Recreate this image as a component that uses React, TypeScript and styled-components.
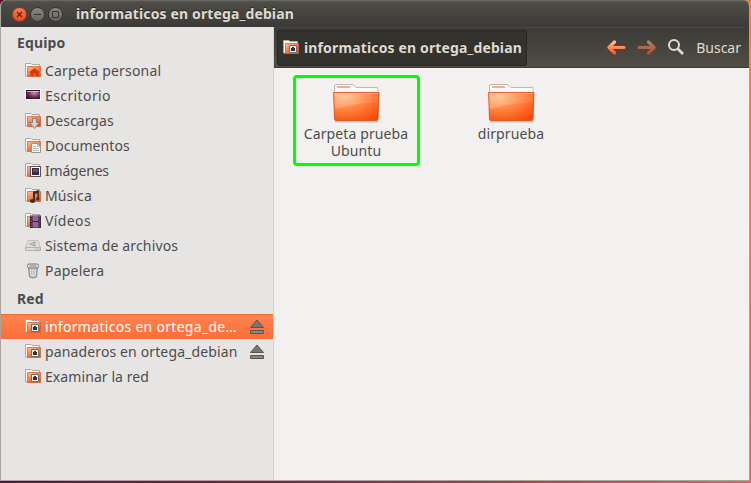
import React from 'react';
import styled, { createGlobalStyle } from 'styled-components';

const GlobalStyle = createGlobalStyle`
  * { box-sizing: border-box; }
  body { margin: 0; font-family: "Noto Sans", "Open Sans", sans-serif; font-size: 14px; color: #4c4c4c; overflow: hidden; }
  svg { display: block; flex: none; }
`;

const Desktop = styled.div`
  width: 751px;
  height: 483px;
  padding-right: 1px;
  padding-bottom: 2px;
  background:
    linear-gradient(90deg, #5c1440 0%, #7a2149 35%, #b53d55 70%, #e8606a 100%) 0 481px / 751px 2px no-repeat,
    linear-gradient(#ff7043 0%, #f2684e 55%, #dd5360 100%) 749px 0 / 2px 483px no-repeat,
    linear-gradient(90deg, #5b0b20 0 10px, #ff7043 10px);
`;

const Window = styled.main`
  display: flex;
  flex-direction: column;
  height: 481px;
  border: 1px solid #aaa39e;
  border-top: 0;
  border-bottom-width: 1px;
  border-radius: 6px 6px 0 0;
  overflow: hidden;
  background: #f2f1f0;
`;

const TitleBar = styled.header`
  display: flex;
  align-items: center;
  flex: none;
  height: 27px;
  margin: 0 -1px;
  padding-left: 12px;
  background: linear-gradient(#535149 0, #4b4a44 4px, #3c3b37 100%);
  border-top: 1px solid #686761;
`;

const WindowButtons = styled.div`
  display: flex;
  gap: 3px;
  width: 64px;
`;

const WindowButton = styled.button<{ $close?: boolean }>`
  width: 15px;
  height: 15px;
  padding: 0;
  border-radius: 50%;
  border: 1px solid ${p => (p.$close ? '#a63715' : '#35342f')};
  background: ${p => (p.$close ? 'linear-gradient(#fb7b53, #e84b1d)' : 'linear-gradient(#89877e, #66655d)')};
`;

const Title = styled.h1<{ $spacing: number }>`
  margin: 0 0 1px;
  font-size: 14px;
  line-height: 20px;
  font-weight: 700;
  color: #dfdbd2;
  white-space: nowrap;
  letter-spacing: ${p => p.$spacing}px;
  text-shadow: 0 -1px #252421;
`;

const PathName = styled(Title)`
  margin: 0;
`;

const Body = styled.div`
  display: flex;
  flex: 1;
  min-height: 0;
`;

const Sidebar = styled.nav`
  width: 273px;
  flex: none;
  background: #e7e5e4;
  border-right: 1px solid #d5d1cf;
`;

const Section = styled.h2`
  margin: 0;
  height: 31px;
  padding-left: 16px;
  font-size: 14px;
  line-height: 32px;
  font-weight: 700;
  letter-spacing: .15px;
  color: #4c4c4c;
`;

const Place = styled.div<{ $selected?: boolean }>`
  display: flex;
  align-items: center;
  gap: 4px;
  height: 25px;
  padding: 0 8px 0 24px;
  color: ${p => (p.$selected ? '#fff' : '#4c4c4c')};
  background: ${p => (p.$selected ? 'linear-gradient(#ff8350, #fc6e38)' : 'none')};
  box-shadow: ${p => (p.$selected ? 'inset 0 1px #ee6a35' : 'none')};
`;

const PlaceName = styled.span<{ $spacing: number }>`
  flex: 1;
  line-height: 24px;
  white-space: nowrap;
  letter-spacing: ${p => p.$spacing}px;
`;

const Main = styled.section`
  flex: 1;
  background: #f2f1f0;
`;

const Toolbar = styled.div`
  display: flex;
  align-items: center;
  height: 41px;
  margin-right: -1px;
  padding: 0 9px 0 3px;
  background: linear-gradient(#3b3a36, #504e45);
  border-top: 1px solid #464540;
  border-bottom: 1px solid #3a3934;
`;

const PathButton = styled.div`
  display: flex;
  align-items: center;
  gap: 5px;
  width: 250px;
  height: 36px;
  margin-right: auto;
  padding-left: 5px;
  border: 1px solid #272622;
  border-radius: 3px;
  background: #33322d;
`;

const Actions = styled.div`
  display: flex;
  align-items: center;
  color: #dfdbd2;
  gap: 11px;
`;

const SearchIcon = styled.svg`
  margin-bottom: 2px;
`;

const Files = styled.div`
  display: flex;
  padding: 7px 0 0 19px;
  gap: 28px;
`;

const File = styled.div<{ $marked?: boolean }>`
  display: flex;
  flex-direction: column;
  align-items: center;
  width: 127px;
  height: 91px;
  padding: 5px 1px 0 0;
  border: 3px solid ${p => (p.$marked ? '#00ff00' : 'transparent')};
  border-radius: 4px;
`;

const FileName = styled.span<{ $spacing: number }>`
  margin-top: 2px;
  line-height: 17px;
  text-align: center;
  white-space: pre-line;
  letter-spacing: ${p => p.$spacing}px;
`;

type Kind = 'home' | 'download' | 'document' | 'image' | 'music' | 'video' | 'network' | 'desktop' | 'disk' | 'trash';

const emblems: Partial<Record<Kind, React.ReactNode>> = {
  home: <path d="M4 9.5 9.5 5l5.5 4.5h-1.3V13h-3v-2.5H8.5V13h-3V9.5z" fill="#d43b08" />,
  download: <path d="M7.500 5.500h4v4h3L9.500 15.500l-5-6h3z" fill="#d5d4d2" stroke="#777" strokeWidth=".9" />,
  document: (
    <>
      <path d="M6.500 5.500h6l3 3v6h-9z" fill="#f5f5f5" stroke="#969696" />
      <path d="M12.500 5.500v3h3M8 8.500h3M8 10.500h6M8 12.500h6" fill="none" stroke="#aaa" strokeWidth=".8" />
    </>
  ),
  image: (
    <>
      <path d="M5.500 3.500h10v10h-10z" fill="#fff" stroke="#55504d" />
      <path d="M7 5h7v7H7z" fill="#3c2945" />
      <path d="M8 6h5v3H8z" fill="#67506f" />
    </>
  ),
  music: (
    <g fill="#333">
      <path d="M8 3.500 14 2v3L10 6v7H8z" />
      <path d="M12.500 3H14v8h-1.500z" />
      <ellipse cx="7.500" cy="13" rx="2.700" ry="2" />
      <ellipse cx="12.700" cy="11" rx="1.600" ry="1.400" />
    </g>
  ),
  video: (
    <>
      <path d="M5 2.500h11V15H5z" fill="#29252b" />
      <path d="M7.500 3h6v5h-6zM7.500 9h6v5.500h-6z" fill="#94659a" />
      <path d="M6.200 3v12M14.800 3v12" stroke="#aaa" strokeWidth=".9" strokeDasharray="1 1.500" />
    </>
  ),
  network: (
    <>
      <path d="M6.500 5.500h7v7h-7z" fill="#eee" stroke="#746e68" />
      <path d="M8 8h1V7h2v1h1v3H8z" fill="#333" />
    </>
  ),
};

function PlaceIcon({ kind }: { kind: Kind }) {
  if (kind === 'desktop')
    return (
      <svg width="16" height="16" viewBox="0 0 16 16">
        <defs>
          <radialGradient id="wall" cx=".6" cy=".35" r=".7">
            <stop stopColor="#c791ad" /><stop offset=".5" stopColor="#81395f" /><stop offset="1" stopColor="#32102b" />
          </radialGradient>
        </defs>
        <path fill="#fff" d="M0 1h16v11H0z" />
        <path fill="url(#wall)" d="M1 2h14v9H1z" />
        <path fill="#301022" d="M1 2h14v1H1z" />
        <path fill="#f1e8ed" d="M2 3h12v.7H2z" />
      </svg>
    );
  if (kind === 'disk')
    return (
      <svg width="16" height="16" viewBox="0 0 16 16">
        <path d="M3 2.500h10l2.500 7H.5z" fill="#dedddc" stroke="#c3c1c0" />
        <path d="M.5 9.500h15v3H.5z" fill="#cfcdcb" stroke="#b3b1af" />
        <path d="M4 6h2l3-2v4L6 6m3-1.500h2m-2 3h2" fill="none" stroke="#a19f9d" />
        <path d="M2 11h8" stroke="#eee" />
      </svg>
    );
  if (kind === 'trash')
    return (
      <svg width="16" height="16" viewBox="0 0 16 16">
        <path d="M3.500 4 4.500 14q3.500 2 7 0l1-10z" fill="#bcbdbd" stroke="#858686" />
        <path d="M5.500 6 6 13.500M8 6v8M10.500 6 10 13.500" stroke="#e4e4e4" />
        <rect x="2.500" y="1" width="11" height="4" rx="1.500" fill="#e5e5e5" stroke="#777" />
        <path d="M4.500 3h7" stroke="#777" />
      </svg>
    );
  return (
    <svg width="16" height="16" viewBox="0 0 16 16">
      <defs>
        <linearGradient id={`place-${kind}`} x2="0.700" y2="1">
          <stop stopColor="#ffc09a" /><stop offset="1" stopColor="#f04810" />
        </linearGradient>
      </defs>
      <path d="M.5 13V.5H6l1 1h7.500V13z" fill="#faf9f8" stroke="#aaa7a4" />
      <path d="M2.500 3.500h13v10h-13z" fill={`url(#place-${kind})`} stroke="#dd612d" strokeWidth=".8" />
      {emblems[kind]}
    </svg>
  );
}

function Eject() {
  return (
    <svg width="16" height="16" viewBox="0 0 16 16">
      <path d="M8 1 14.500 8.500h-13z" fill="#777" stroke="#555" />
      <path d="M1.500 11.500h13v3h-13z" fill="#8a8783" stroke="#555" />
    </svg>
  );
}

function Arrow({ forward }: { forward?: boolean }) {
  const id = forward ? 'arrow-next' : 'arrow-back';
  return (
    <svg width="19" height="16" viewBox="0 0 19 16" opacity={forward ? 0.55 : 1}>
      <defs>
        <linearGradient id={id} gradientUnits="userSpaceOnUse" x1="0" y1="1" x2="0" y2="14">
          <stop stopColor="#ffc294" /><stop offset="1" stopColor="#ff5314" />
        </linearGradient>
      </defs>
      <path
        transform={forward ? 'matrix(-1 0 0 1 19 0)' : undefined}
        d="M7.500 2 2 7.500 7.500 13M2.500 7.500h14.500"
        fill="none"
        stroke={`url(#${id})`}
        strokeWidth="3.200"
        strokeLinecap="round"
        strokeLinejoin="round"
      />
    </svg>
  );
}

function Folder({ id }: { id: string }) {
  return (
    <svg width="48" height="40" viewBox="0 0 48 40">
      <defs>
        <radialGradient id={id} cx=".25" cy=".15" r="1">
          <stop stopColor="#ffbb82" /><stop offset=".45" stopColor="#ff8543" /><stop offset="1" stopColor="#fb4a07" />
        </radialGradient>
        <linearGradient id={`${id}-gloss`} x2="1" y2="0">
          <stop stopColor="#fff" stopOpacity=".2" /><stop offset="1" stopColor="#fff" stopOpacity=".08" />
        </linearGradient>
      </defs>
      <path d="M3 38.500h43" stroke="#000" strokeOpacity=".18" strokeWidth="2" />
      <path d="M2.500 35V3q0-1.500 1.500-1.500h16q1.500 0 2.500 1.500l1.500 1.500H45q1 0 1 1V35z" fill="#fafafa" stroke="#bbb8b5" />
      <path d="M5 3h13v2H5z" fill="#ffac80" />
      <path d="M1.500 9.500h45.500L46 36q0 1.500-1.500 1.500H4Q2.500 37.500 2.500 36z" fill={`url(#${id})`} stroke="#d6490f" strokeOpacity=".75" />
      <path d="M2.500 10.500h43.500l-.4 9Q24 20 3 26z" fill={`url(#${id}-gloss)`} />
      <path d="M2.500 10.500H46" stroke="#ffc093" strokeOpacity=".6" />
    </svg>
  );
}

interface PlaceData { kind: Kind; name: string; spacing: number; selected?: boolean; mounted?: boolean }

const local: PlaceData[] = [
  { kind: 'home', name: 'Carpeta personal', spacing: 0.2 },
  { kind: 'desktop', name: 'Escritorio', spacing: 0.4 },
  { kind: 'download', name: 'Descargas', spacing: 0.05 },
  { kind: 'document', name: 'Documentos', spacing: 0.08 },
  { kind: 'image', name: 'Imágenes', spacing: -0.2 },
  { kind: 'music', name: 'Música', spacing: 0.1 },
  { kind: 'video', name: 'Vídeos', spacing: 0.4 },
  { kind: 'disk', name: 'Sistema de archivos', spacing: 0.15 },
  { kind: 'trash', name: 'Papelera', spacing: 0.2 },
];

const remote: PlaceData[] = [
  { kind: 'network', name: 'informaticos en ortega_de…', spacing: 0.3, selected: true, mounted: true },
  { kind: 'network', name: 'panaderos en ortega_debian', spacing: 0.13, mounted: true },
  { kind: 'network', name: 'Examinar la red', spacing: 0.08 },
];

const Places = ({ items }: { items: PlaceData[] }) => (
  <>
    {items.map(p => (
      <Place key={p.name} $selected={p.selected}>
        <PlaceIcon kind={p.kind} />
        <PlaceName $spacing={p.spacing}>{p.name}</PlaceName>
        {p.mounted && <Eject />}
      </Place>
    ))}
  </>
);

export default function App() {
  return (
    <Desktop>
      <GlobalStyle />
      <Window>
        <TitleBar>
          <WindowButtons>
            <WindowButton $close aria-label="Cerrar">
              <svg width="13" height="13" viewBox="0 0 13 13"><path d="m4 4 5 5m0-5L4 9" stroke="#5d210f" strokeWidth="1.300" /></svg>
            </WindowButton>
            <WindowButton aria-label="Minimizar">
              <svg width="13" height="13" viewBox="0 0 13 13"><path d="M3 6.500h7" stroke="#33322e" /></svg>
            </WindowButton>
            <WindowButton aria-label="Maximizar">
              <svg width="13" height="13" viewBox="0 0 13 13"><path d="M3.500 3.500h6v6h-6z" fill="none" stroke="#33322e" /></svg>
            </WindowButton>
          </WindowButtons>
          <Title $spacing={0.14}>informaticos en ortega_debian</Title>
        </TitleBar>
        <Body>
          <Sidebar>
            <Section>Equipo</Section>
            <Places items={local} />
            <Section>Red</Section>
            <Places items={remote} />
          </Sidebar>
          <Main>
            <Toolbar>
              <PathButton>
                <PlaceIcon kind="network" />
                <PathName as="span" $spacing={0.14}>informaticos en ortega_debian</PathName>
              </PathButton>
              <Actions>
                <Arrow />
                <Arrow forward />
                <SearchIcon width="18" height="18" viewBox="0 0 18 18">
                  <circle cx="7" cy="7" r="5" fill="none" stroke="#dfdbd2" strokeWidth="2" />
                  <path d="m10.500 10.500 5.500 5.500" stroke="#dfdbd2" strokeWidth="2.600" />
                </SearchIcon>
                <PlaceName $spacing={0}>Buscar</PlaceName>
              </Actions>
            </Toolbar>
            <Files>
              <File $marked>
                <Folder id="folder-a" />
                <FileName $spacing={0.12}>{'Carpeta prueba\nUbuntu'}</FileName>
              </File>
              <File>
                <Folder id="folder-b" />
                <FileName $spacing={0.12}>dirprueba</FileName>
              </File>
            </Files>
          </Main>
        </Body>
      </Window>
    </Desktop>
  );
}
